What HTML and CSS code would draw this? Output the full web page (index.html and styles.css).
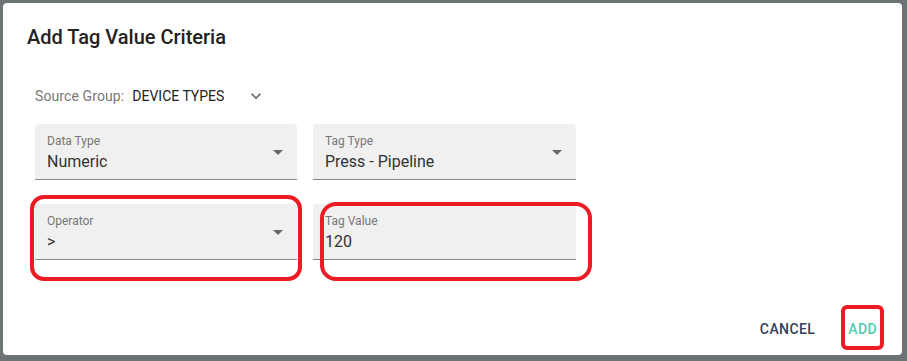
FILE: index.html
```html
<!DOCTYPE html>
<html lang="en">
<head>
    <meta charset="UTF-8">
    <meta name="viewport" content="width=device-width, initial-scale=1.0">
    <title>Add Tag Value Criteria</title>
    <link rel="stylesheet" href="styles.css">
</head>
<body>
    <div id="dialog">
        <h2 id="dialog-title">Add Tag Value Criteria</h2>

        <div id="dialog-content">
            <div id="source-group">
                <span class="source-label">Source Group:</span>
                <span class="source-value">DEVICE TYPES</span>
                <svg class="chevron" viewBox="0 0 24 24" width="20" height="20">
                    <path d="M16.59 8.59L12 13.17 7.41 8.59 6 10l6 6 6-6z" fill="#666"></path>
                </svg>
            </div>

            <div id="fields">
                <div class="field select">
                    <label>Data Type</label>
                    <div class="value">Numeric</div>
                </div>
                <div class="field select">
                    <label>Tag Type</label>
                    <div class="value">Press - Pipeline</div>
                </div>
                <div class="field select">
                    <label>Operator</label>
                    <div class="value">&gt;</div>
                </div>
                <div class="field">
                    <label>Tag Value</label>
                    <div class="value">120</div>
                </div>
            </div>
        </div>

        <div id="dialog-actions">
            <button class="btn btn-cancel">Cancel</button>
            <button class="btn btn-add">Add</button>
        </div>

        <!-- red marks drawn over the screenshot -->
        <div class="mark mark-operator"></div>
        <div class="mark mark-value"></div>
        <div class="mark mark-add"></div>
    </div>
</body>
</html>
```

FILE: styles.css
```css
body {
    margin: 0;
    background: #6d7275;
    font-family: Roboto, "Liberation Sans", Arial, sans-serif;
}

#dialog {
    position: relative; /* cho các khung đỏ */
    display: flex;
    flex-direction: column;
    margin: 3px 0 0 3px;
    width: 899px;
    height: 352px;
    background: #fff;
    border-radius: 4px;
}

#dialog-title {
    margin: 0;
    padding: 18px 24px 0;
    font-size: 20px;
    font-weight: 500;
    line-height: 32px;
    color: #222;
}

#dialog-content {
    padding: 0 32px;
}

#source-group {
    display: flex;
    align-items: center;
    height: 24px;
    margin-top: 31px;
    font-size: 14px;
    line-height: 20px;
}
.source-label {
    color: #777;
    letter-spacing: 0.1px;
}
.source-value {
    margin-left: 8px;
    color: #222;
}
.chevron {
    margin-left: 22px;
}

#fields {
    display: grid;
    grid-template-columns: 262px 263px;
    column-gap: 16px;
    row-gap: 24px;
    margin-top: 16px;
}

.field {
    position: relative;
    box-sizing: border-box;
    height: 56px;
    padding: 9px 12px 0;
    background: #f0f0f0;
    border-radius: 4px 4px 0 0;
    border-bottom: 1px solid #8a8a8a;
}
.field label {
    display: block;
    font-size: 12px;
    line-height: 16px;
    color: #777;
}
.field .value {
    margin-top: 3px;
    font-size: 16px;
    line-height: 20px;
    color: #333;
}
/* mũi tên select */
.select::after {
    content: "";
    position: absolute;
    right: 14px;
    top: 26px;
    border-left: 5px solid transparent;
    border-right: 5px solid transparent;
    border-top: 5px solid #666;
}

#dialog-actions {
    display: flex;
    justify-content: flex-end;
    gap: 17px;
    margin-top: auto;
    padding: 0 17px 8px;
}

.btn {
    padding: 6px 8px;
    border: none;
    background: none;
    font-family: inherit;
    font-size: 14px;
    font-weight: 500;
    line-height: 24px;
    letter-spacing: 0.4px;
    text-transform: uppercase;
    cursor: pointer;
}
.btn-cancel {
    color: #34405a;
}
.btn-add {
    color: #4fcbb0;
}

.mark {
    position: absolute;
    box-sizing: border-box;
    border: 4px solid #ed1c24;
}
.mark-operator {
    left: 27px;
    top: 192px;
    width: 272px;
    height: 86px;
    border-radius: 14px;
}
.mark-value {
    left: 317px;
    top: 199px;
    width: 272px;
    height: 79px;
    border-radius: 16px;
}
.mark-add {
    left: 838px;
    top: 302px;
    width: 43px;
    height: 45px;
    border-radius: 6px;
}
```
